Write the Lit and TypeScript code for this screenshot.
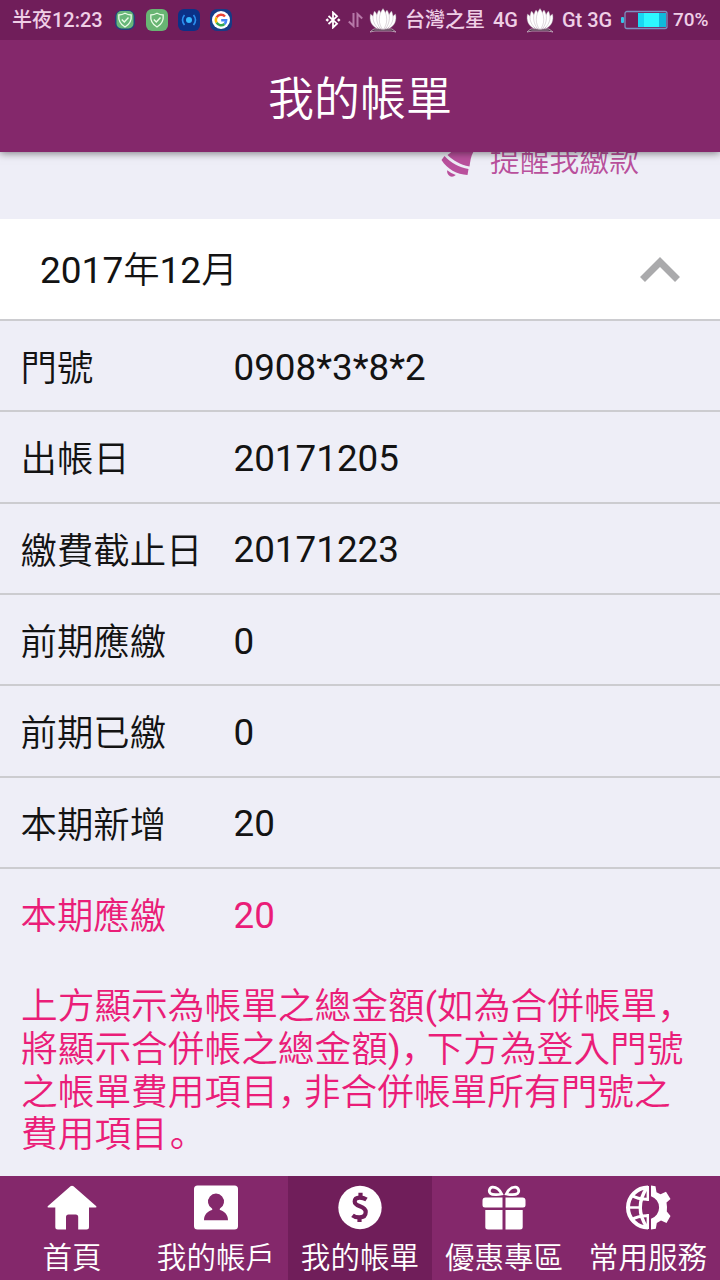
import { LitElement, html, css, svg } from "lit";
import { customElement, property } from "lit/decorators.js";
import { classMap } from "lit/directives/class-map.js";

const rows: [string, string][] = [
  ["門號", "0908*3*8*2"],
  ["出帳日", "20171205"],
  ["繳費截止日", "20171223"],
  ["前期應繳", "0"],
  ["前期已繳", "0"],
  ["本期新增", "20"],
  ["本期應繳", "20"],
];

const lotus = svg`
  <path d="M5 21 L23 21 Q25 22.500 27 24 L22 23 H6 L1 24 Q3 22 5 21Z" fill="#3d2038" stroke="#c9b2c4" stroke-width=".8"/>
  <g fill="#fff" stroke="#a99aa6" stroke-width=".4">
  <path d="M9 21 C2 18 0 12 1.500 6 C5 8 7 13 9 21Z"/><path d="M19 21 C26 18 28 12 26.500 6 C23 8 21 13 19 21Z"/>
  <path d="M10 21 C3 15 3 8 5.500 3 C9 7 11 13 11 21Z"/><path d="M18 21 C25 15 25 8 22.500 3 C19 7 17 13 17 21Z"/>
  <path d="M12 21.500 C6 14 7 6 10 2 C13 5 14 12 13 21Z"/><path d="M16 21.500 C22 14 21 6 18 2 C15 5 14 12 15 21Z"/>
  <path d="M14 22 C9 16 9 7 14 .5 C19 7 19 16 14 22Z"/></g>`;

const shield = svg`<path d="M11 4.300 Q14 6 17.200 6 Q18 14 11 18 Q4 14 4.800 6 Q8 6 11 4.300Z" fill="none" stroke="#e9fbe6" stroke-width="1.300"/><path d="M7.800 10.500 L10.300 13 L14.500 8.500" fill="none" stroke="#e9fbe6" stroke-width="1.400"/>`;

const navIcons: Record<string, unknown> = {
  home: svg`<path d="M23.500 1.300 Q25 0 26.500 1.300 L49.300 21.300 Q50 22.500 48.500 22.500 H42 V42 Q42 44.500 39.500 44.500 H31.200 V32 Q31.200 29.500 28.700 29.500 H21.500 Q19 29.500 19 32 V44.500 H10.800 Q8.300 44.500 8.300 42 V22.500 H1.500 Q0 22.500 .7 21.300Z" fill="#fff"/>`,
  account: svg`<rect x="3" y=".5" width="44" height="44" rx="3.500" fill="#fff"/><path d="M13 35.200 C13 29 17 26.500 21 25 C21.500 24.500 21.500 24 21 23.500 A8 8 0 1 1 29 23.500 C28.500 24 28.500 24.500 29 25 C33 26.500 37 29 37 35.200Z" fill="#84286b"/>`,
  bill: svg`<circle cx="25" cy="22.500" r="21.700" fill="#fff"/><path d="M31.500 14.500 C29.500 13.200 27 12.600 24.700 12.600 C21.500 12.600 19.700 14 19.700 16.500 C19.700 22.500 30.700 20 30.700 27 C30.700 30.300 28.500 32.400 24.300 32.400 C21.500 32.400 19 31.500 17.500 30.300" fill="none" stroke="#701e5a" stroke-width="4.200"/><path d="M25.500 7.800 V14 M24.500 31 V37" stroke="#701e5a" stroke-width="4.200"/>`,
  gift: svg`<g fill="#fff"><path d="M6.500 12.500 H23.500 V22.500 H6 Q3.500 22.500 3.500 20 V15.500 Q3.500 12.500 6.500 12.500Z M26.500 12.500 H43.500 Q46.500 12.500 46.500 15.500 V20 Q46.500 22.500 44 22.500 H26.500Z M6.300 25 H23.500 V44.500 H9 Q6.300 44.500 6.300 42Z M26.500 25 H43.700 V42 Q43.700 44.500 41 44.500 H26.500Z"/></g><path d="M22.700 9 C19 10 13.500 10 11.300 8.300 C9.300 6.500 10.500 2.500 13.500 2.200 C17.500 2 21 5.500 22.700 9Z M27.300 9 C31 10 36.500 10 38.700 8.300 C40.700 6.500 39.500 2.500 36.500 2.200 C32.500 2 29 5.500 27.300 9Z" fill="none" stroke="#fff" stroke-width="2.800"/>`,
  service: svg`<g fill="none" stroke="#fff" stroke-width="4"><path d="M25 2.500 A20 20 0 0 0 25 42.500"/><path d="M24 2.500 Q10.500 22.500 24 42.500" stroke-width="3.400"/><path d="M8 10 Q15 14.500 25 14.300 M8 35 Q15 30.500 25 30.700" stroke-width="3"/><path d="M5 22.500 H17" stroke-width="2.500"/><path d="M24.800 1 V16 M24.800 29 V44" stroke-width="2.400"/></g>
  <path d="M28 .5 L32.500 1.200 L33.500 7.200 L37.500 9.200 L43 6.800 L47.500 14 L43.500 17.500 L44 22 L43.800 26.500 L47.500 31 L43.500 38 L38 35.500 L33.800 38 L32.800 43.800 L28 44.500 V33.700 A11.800 11.800 0 0 0 28 11.300Z" fill="#fff"/>`,
};

@customElement("status-bar")
class StatusBar extends LitElement {
  static styles = css`
    :host { display: flex; height: 40px; flex: none; background: #701e5a; color: #efcfe6; align-items: center; justify-content: space-between;
      font: 500 20px/40px Roboto, "Noto Sans CJK TC", sans-serif; padding: 0 12px 0 12px; white-space: nowrap; position: relative; z-index: 2; }
    .side { display: flex; align-items: center; }
    svg { display: block; flex: none; }
    .app { margin-left: 10px; }
    .time { width: 92px; }
    .sim { margin-left: 8px; width: 115px; word-spacing: 3px; }
    .sim2 { margin-left: 8px; width: 51px; }
    .flower { margin-left: 5px; }
    .second { margin-left: 6px; }
    .cell { margin-left: 8px; }
    .pct { margin-left: 5px; width: 35px; font-size: 19px; }
    .bt { margin-right: 7px; }
    .left { margin-left: -3px; }
    .data { margin-right: 1px; }
  `;
  render() {
    return html`
      <div class="side">
        <span class="time">半夜12:23</span>
        <svg class="app" width="22" height="22" viewBox="0 0 22 22"><rect x="1" y="1" width="20" height="20" rx="7" fill="#23427d"/><rect x="2.500" y="2" width="17" height="17.500" rx="5" fill="#68b77a"/>${shield}</svg>
        <svg class="app" width="22" height="22" viewBox="0 0 22 22"><rect width="22" height="22" rx="6" fill="#68b573"/>${shield}</svg>
        <svg class="app" width="22" height="22" viewBox="0 0 22 22"><rect width="22" height="22" rx="6" fill="#0b3187"/><circle cx="11" cy="11" r="3" fill="#35b7ff"/><path d="M6.500 6 Q2.500 11 6.500 16 M15.500 6 Q19.500 11 15.500 16" fill="none" stroke="#2c8ff0" stroke-width="1.600"/></svg>
        <svg class="app" width="22" height="22" viewBox="0 0 22 22"><rect width="22" height="22" rx="7" fill="#173b86"/><circle cx="11" cy="11" r="9" fill="#fff"/><g fill="none" stroke-width="2.400"><path d="M15 7.500 A5.200 5.200 0 0 0 6.600 8.300" stroke="#ea4335"/><path d="M6.600 8.300 A5.200 5.200 0 0 0 6.600 13.700" stroke="#fbbc05"/><path d="M6.600 13.700 A5.200 5.200 0 0 0 14.500 15" stroke="#34a853"/><path d="M14.500 15 A5.200 5.200 0 0 0 16.200 11.200 H11.200" stroke="#4285f4"/></g></svg>
      </div>
      <div class="side">
        <svg class="bt left" width="16" height="18" viewBox="0 0 16 18"><path d="M3.500 5 L12 12.700 L8 16.500 V1.500 L12 5.300 L3.500 13" fill="none" stroke="#fff" stroke-width="1.800"/><path d="M.5 9 L2.300 7.200 L4 9 L2.300 10.800Z M12 9 L13.800 7.200 L15.500 9 L13.800 10.800Z" fill="#fff"/></svg>
        <svg class="data" width="15" height="16" viewBox="0 0 15 16"><path d="M5.500 1 V14 L.8 9.500 M9.500 15 V2 L14.200 6.500" fill="none" stroke="#b678a7" stroke-width="2"/></svg>
        <svg class="flower" width="28" height="25" viewBox="0 0 28 25">${lotus}</svg>
        <span class="sim">台灣之星 4G</span>
        <svg class="second" width="28" height="25" viewBox="0 0 28 25">${lotus}</svg>
        <span class="sim2">Gt 3G</span>
        <svg class="cell" width="47" height="20" viewBox="0 0 47 20"><rect x="0" y="7" width="3" height="6" rx="1" fill="#35c6e8"/><rect x="4" y="1.500" width="42" height="17" rx="2" fill="none" stroke="#7b8fc0" stroke-width="1.300"/><path d="M17 3 H23 V17 H17Z" fill="#19d8f3"/><path d="M23 3 H38 V17 H23Z" fill="#2cf8ff"/><path d="M38 3 H45 V17 H38Z" fill="#10b9dc"/></svg>
        <span class="pct">70%</span>
      </div>`;
  }
}

@customElement("tab-item")
class TabItem extends LitElement {
  @property() icon = "home";
  @property() label = "";
  @property({ type: Boolean, reflect: true }) active = false;
  static styles = css`
    :host { display: flex; flex-direction: column; align-items: center; box-sizing: border-box; padding-top: 9px; background: #84286b; color: #fff; }
    :host([active]) { background: #701e5a; }
    svg { display: block; flex: none; }
    .label { font: 350 29.600px/40px "Noto Sans CJK TC", sans-serif; margin-top: 6px; white-space: nowrap; }
  `;
  render() {
    return html`<svg width="50" height="45" viewBox="0 0 50 45">${navIcons[this.icon]}</svg><span class="label">${this.label}</span>`;
  }
}

@customElement("app-root")
class AppRoot extends LitElement {
  static styles = css`
    :host { display: flex; flex-direction: column; height: 1280px; width: 720px; overflow: hidden; background: #eeeef7; color: #131313; font-family: Roboto, "Noto Sans CJK TC", sans-serif; }
    .title { position: relative; z-index: 1; flex: none; height: 112px; background: #84286b; color: #fff; text-align: center; font: 350 46px/111px "Noto Sans CJK TC", sans-serif; box-shadow: 0 1px 8px rgba(0,0,0,.5); }
    main { flex: 1; min-height: 0; overflow: hidden; }
    .remind { height: 67px; box-sizing: border-box; padding-left: 440px; display: flex; align-items: flex-start; color: #b9509c; }
    .remind svg { display: block; flex: none; }
    .remind span { font: 350 29.800px/44px "Noto Sans CJK TC", sans-serif; margin: -16px 0 0 14px; }
    .month { height: 102px; box-sizing: border-box; background: #fff; border-bottom: 2px solid #ccccd0; display: flex; align-items: center; justify-content: space-between; padding: 2px 40px 0; font-size: 37px; }
    .month > span { line-height: 44px; height: 50px; }
    .cjk { font: 350 36.400px/44px "Noto Sans CJK TC", sans-serif; }
    .row { height: 91.330px; box-sizing: border-box; border-bottom: 2px solid #ccccd0; display: grid; grid-template-columns: 212.500px 1fr; align-items: center; padding: 0 21px; }
    .row .cjk { white-space: nowrap; margin: -1px 0 0 -0.500px; }
    .value { font-size: 36.800px; line-height: 44px; padding-top: 4px; }
    .due { color: #ea1d78; border-bottom-color: transparent; }
    .note { margin: 22px 20px 0 21px; color: #ea1d78; font: 350 36.700px/42.700px "Noto Sans CJK TC", sans-serif; }
    .line { display: block; white-space: nowrap; height: 42.700px; }
    .comma { font-family: "Noto Sans CJK SC", sans-serif; letter-spacing: -10.700px; }
    .stop { font-family: "Noto Sans CJK SC", sans-serif; padding-left: 2px; }
    .paren { font-family: Roboto, sans-serif; font-weight: 400; }
    nav { flex: none; height: 104px; display: grid; grid-template-columns: repeat(5, 1fr); }
  `;
  render() {
    const comma = html`<span class="comma" lang="zh-CN">，</span>`;
    return html`
      <status-bar></status-bar>
      <header class="title">我的帳單</header>
      <main>
        <div class="remind">
          <svg width="36" height="26" viewBox="0 0 36 26"><g fill="#b9509c"><path d="M36 -4 C31 2 30.500 8 29.500 14.500 C20 12.500 13 8.500 7.500 3 C13 -1 15 -4 17 -8Z"/><path d="M4.500 4 C11 11 19 15.500 28.500 17 L27.500 23 C17 22.500 7 17 1.500 8Z"/><path d="M7.200 18.300 Q11 21.500 15.800 23 Q13 25.500 10 24.300 Q6.500 22 7.200 18.300Z"/></g></svg>
          <span>提醒我繳款</span>
        </div>
        <div class="month">
          <span>2017<span class="cjk">年</span>12<span class="cjk">月</span></span>
          <svg width="40" height="26" viewBox="0 0 40 26"><path d="M2.500 22.500 L20 5 L37.500 22.500" fill="none" stroke="#aaaaac" stroke-width="7"/></svg>
        </div>
        ${rows.map(([k, v], i) => html`<div class=${classMap({ row: true, due: i === rows.length - 1 })}><span class="cjk">${k}</span><span class="value">${v}</span></div>`)}
        <div class="note">
          <span class="line">上方顯示為帳單之總金額<span class="paren">(</span>如為合併帳單${comma}</span>
          <span class="line">將顯示合併帳之總金額<span class="paren">)</span>${comma}下方為登入門號</span>
          <span class="line">之帳單費用項目${comma}非合併帳單所有門號之</span>
          <span class="line">費用項目<span class="stop" lang="zh-CN">。</span></span>
        </div>
      </main>
      <nav>
        <tab-item icon="home" label="首頁"></tab-item>
        <tab-item icon="account" label="我的帳戶"></tab-item>
        <tab-item icon="bill" label="我的帳單" active></tab-item>
        <tab-item icon="gift" label="優惠專區"></tab-item>
        <tab-item icon="service" label="常用服務"></tab-item>
      </nav>`;
  }
}
